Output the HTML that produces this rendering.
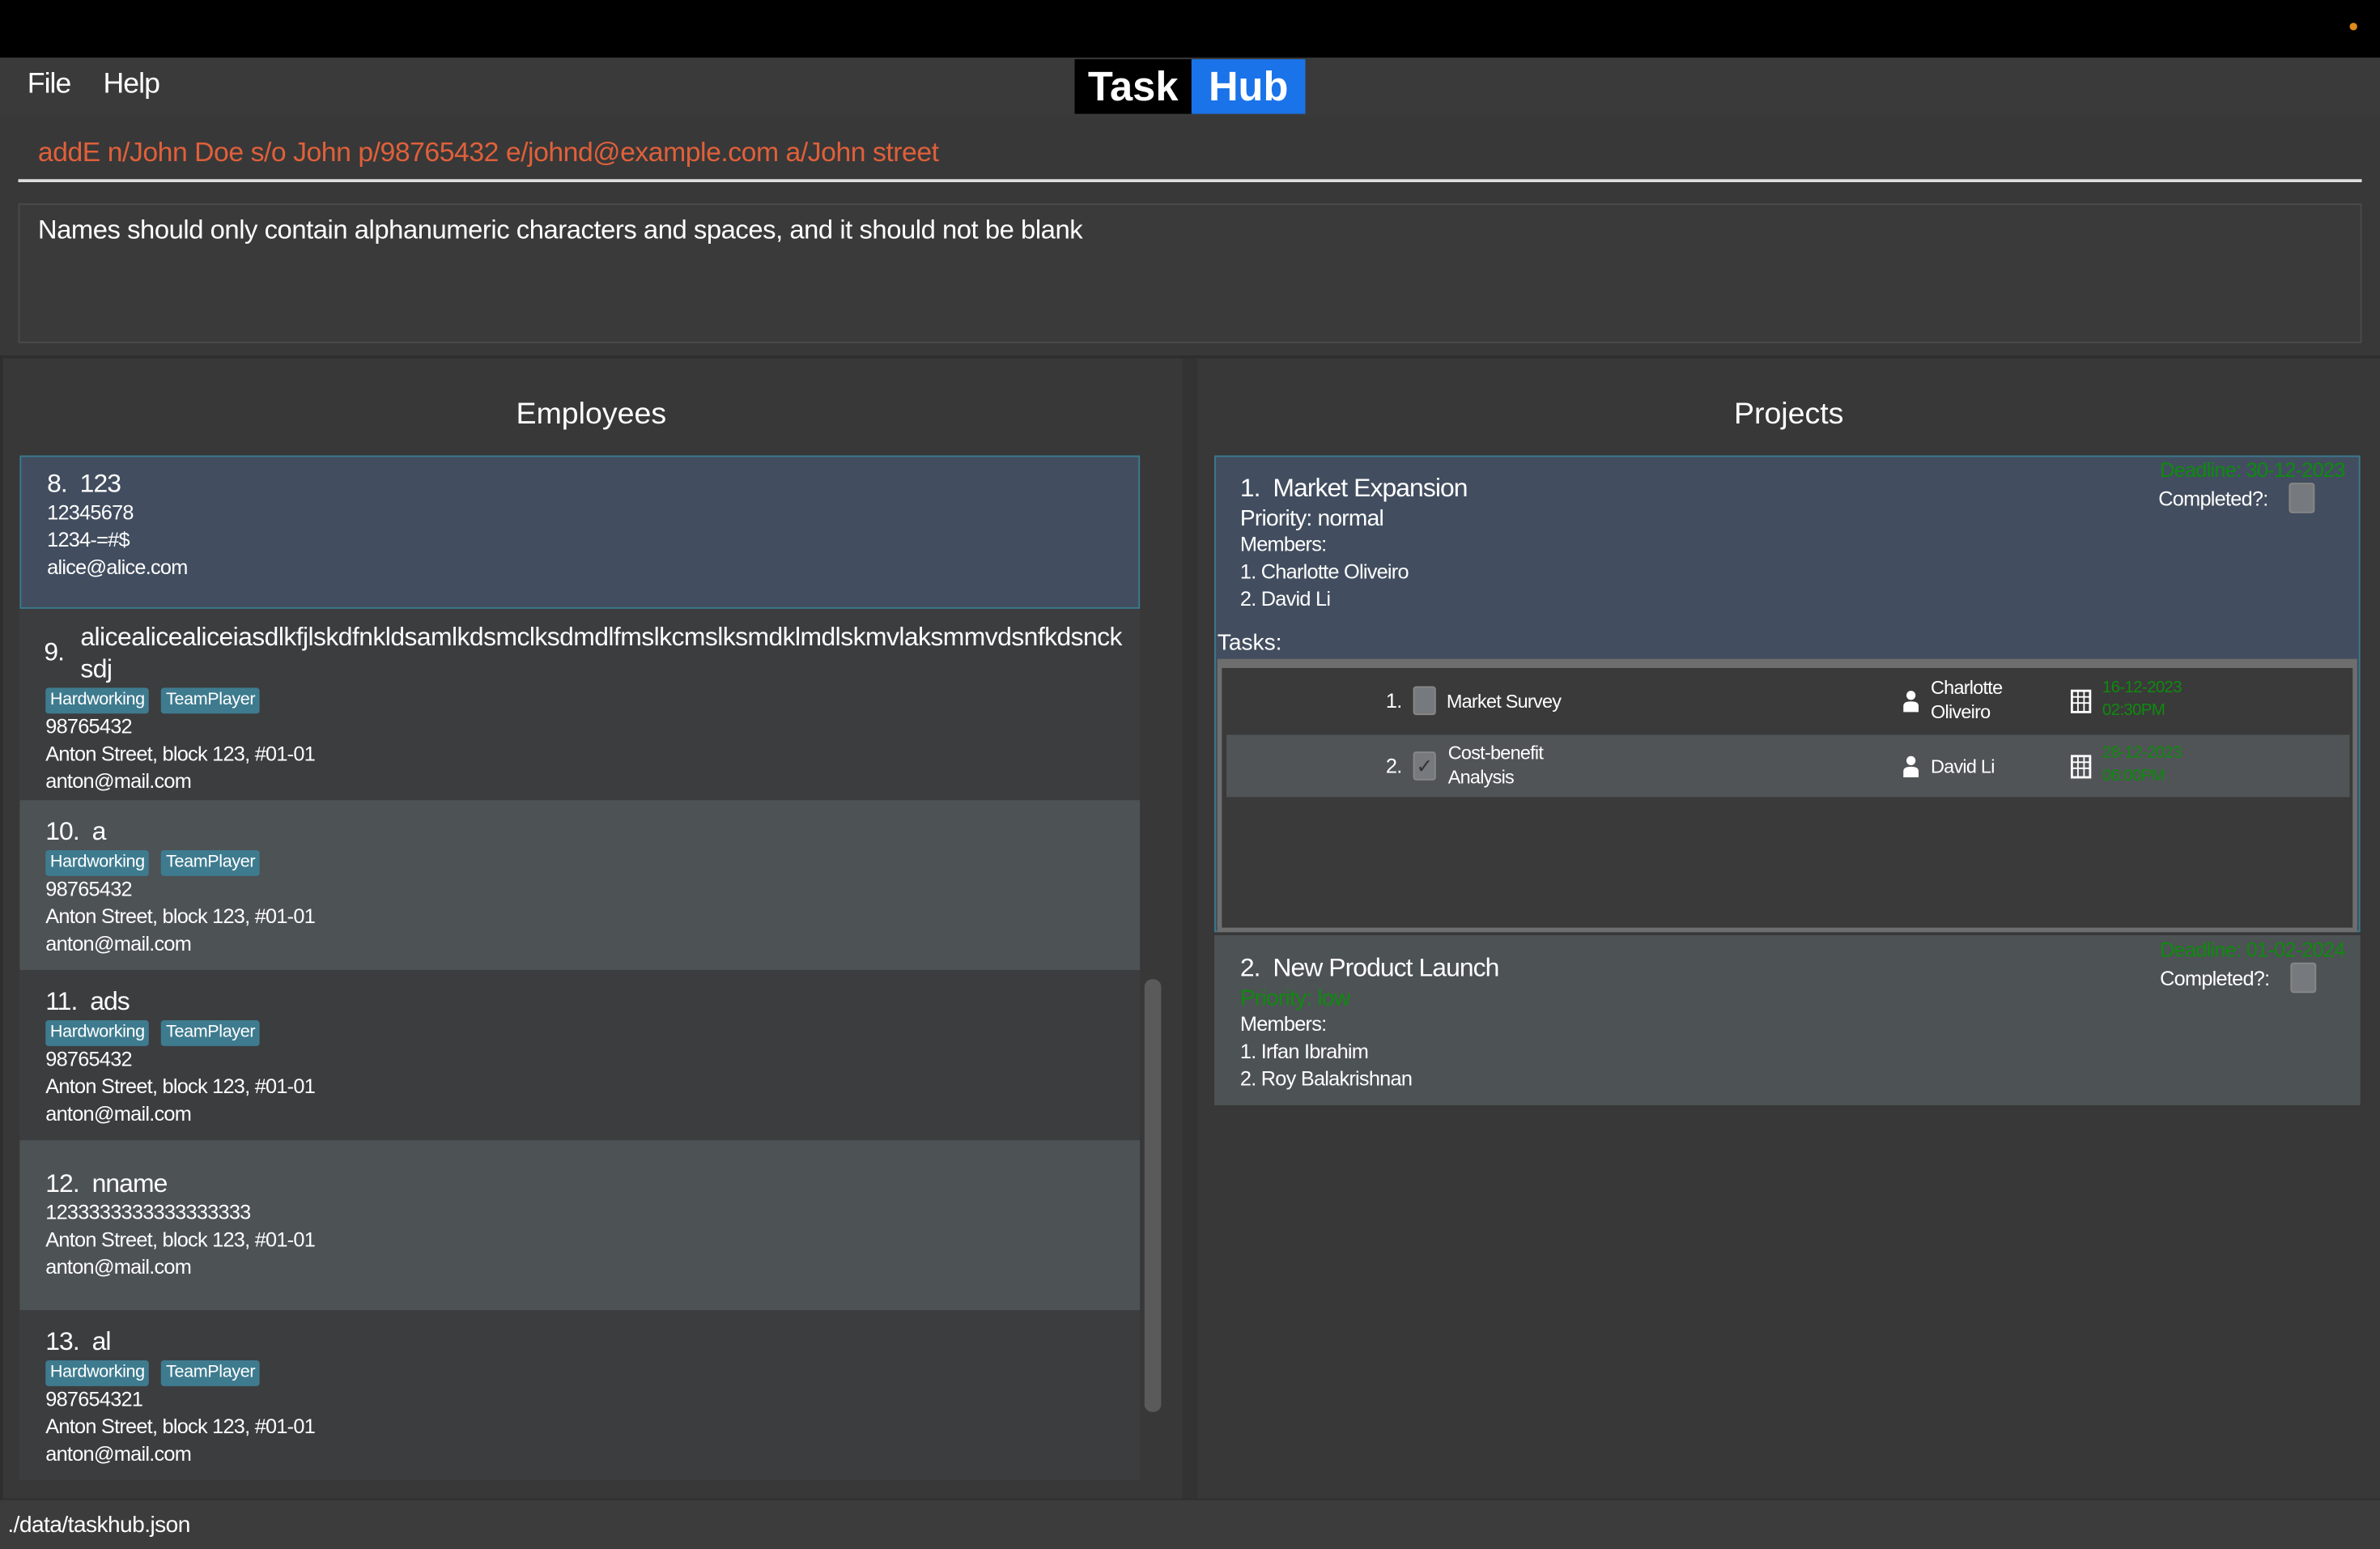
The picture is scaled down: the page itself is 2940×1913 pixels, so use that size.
<!DOCTYPE html>
<html><head><meta charset="utf-8"><style>
*{margin:0;padding:0;box-sizing:border-box}
html,body{width:2940px;height:1912px;overflow:hidden;background:#383838}
#w{position:absolute;left:0;top:0;width:1568px;height:1020px;transform:scale(1.875);transform-origin:0 0;font-family:"Liberation Sans",sans-serif;color:#fff;background:#383838}
.a{position:absolute}
.t{font-size:17px;letter-spacing:-0.5px}
.d{font-size:13.5px;letter-spacing:-0.4px;line-height:18px}
.tag{display:inline-block;background:#3e7b8f;color:#fff;font-size:11.5px;padding:1px 3px;border-radius:2px;margin-right:8px;letter-spacing:-0.2px;line-height:15px}
.card{position:absolute;left:13px;width:738px;padding-left:17px}
.g{color:#0e8a0e}
.cb{position:absolute;width:17px;height:20px;background:#76797d;border-radius:2px;border:1px solid #888}
</style></head><body><div id="w">
<div class="a" style="left:0;top:0;width:1568px;height:38px;background:#000"></div>
<div class="a" style="left:1548px;top:15px;width:5px;height:5px;border-radius:50%;background:#e08a1c"></div>
<div class="a" style="left:0;top:38px;width:1568px;height:39px;background:#3a3a3a"></div>
<div class="a t" style="left:18px;top:45px;font-size:19px">File</div>
<div class="a t" style="left:68px;top:45px;font-size:19px">Help</div>
<div class="a" style="left:708px;top:39px;width:77px;height:36px;background:#000;font-weight:bold;font-size:27px;text-align:center;line-height:36px">Task</div>
<div class="a" style="left:785px;top:39px;width:75px;height:36px;background:#1a73e8;font-weight:bold;font-size:27px;text-align:center;line-height:36px">Hub</div>
<div class="a" style="left:0;top:77px;width:1568px;height:40px;background:#383838"></div>
<div class="a" style="left:25px;top:90px;font-size:18px;color:#e0603a;letter-spacing:-0.25px">addE n/John Doe s/o John p/98765432 e/johnd@example.com a/John street</div>
<div class="a" style="left:12px;top:118px;width:1544px;height:2px;background:#ddd"></div>
<div class="a" style="left:12px;top:134px;width:1544px;height:92px;background:#3a3a3a;border:1px solid #4a4a4a"></div>
<div class="a" style="left:25px;top:141px;font-size:17.5px;letter-spacing:-0.25px">Names should only contain alphanumeric characters and spaces, and it should not be blank</div>
<div class="a" style="left:0;top:234px;width:1568px;height:2px;background:#2e2e2e"></div>
<div class="a" style="left:779px;top:236px;width:10px;height:751px;background:#333"></div>
<div class="a" style="left:0;top:236px;width:2px;height:751px;background:#2e2e2e"></div>
<div class="a" style="left:0;top:262px;width:779px;text-align:center;font-size:20px">Employees</div>
<div class="a" style="left:789px;top:262px;width:779px;text-align:center;font-size:20px">Projects</div>

<div class="card" style="top:300px;height:101px;background:#424e5f;border:1px solid #3a7a8f;padding-top:8px"><div class="t">8.&nbsp; 123</div><div class="d">12345678<br>1234-=#$<br>alice@alice.com</div></div>
<div class="card" style="top:401px;height:126px;background:#3c3d3f;padding-top:8px"><div class="a t" style="left:16px;top:19px">9.</div><div class="t" style="padding-left:23px;line-height:21px;letter-spacing:-0.3px">alicealicealiceiasdlkfjlskdfnkldsamlkdsmclksdmdlfmslkcmslksmdklmdlskmvlaksmmvdsnfkdsnck<br>sdj</div><div style="margin-top:0px"><span class="tag">Hardworking</span><span class="tag">TeamPlayer</span></div><div class="d">98765432<br>Anton Street, block 123, #01-01<br>anton@mail.com</div></div>
<div class="card" style="top:527px;height:112px;background:#4d5255;padding-top:11px"><div class="t">10.&nbsp; a</div><div><span class="tag">Hardworking</span><span class="tag">TeamPlayer</span></div><div class="d">98765432<br>Anton Street, block 123, #01-01<br>anton@mail.com</div></div>
<div class="card" style="top:639px;height:112px;background:#3c3d3f;padding-top:11px"><div class="t">11.&nbsp; ads</div><div><span class="tag">Hardworking</span><span class="tag">TeamPlayer</span></div><div class="d">98765432<br>Anton Street, block 123, #01-01<br>anton@mail.com</div></div>
<div class="card" style="top:751px;height:112px;background:#4d5255;padding-top:19px"><div class="t">12.&nbsp; nname</div><div class="d">1233333333333333333<br>Anton Street, block 123, #01-01<br>anton@mail.com</div></div>
<div class="card" style="top:863px;height:112px;background:#3c3d3f;padding-top:11px"><div class="t">13.&nbsp; al</div><div><span class="tag">Hardworking</span><span class="tag">TeamPlayer</span></div><div class="d">987654321<br>Anton Street, block 123, #01-01<br>anton@mail.com</div></div>
<div class="a" style="left:754px;top:645px;width:11px;height:285px;background:#5a5a5a;border-radius:5px"></div>

<div class="a" style="left:800px;top:300px;width:755px;height:314px;background:#424e5f;border:1px solid #3a7a8f"></div>
<div class="a t" style="left:817px;top:312px">1.&nbsp; Market Expansion</div>
<div class="a d" style="left:817px;top:333px;font-size:15px">Priority: normal</div>
<div class="a d" style="left:817px;top:350px">Members:<br>1. Charlotte Oliveiro<br>2. David Li</div>
<div class="a d g" style="left:1423px;top:301px">Deadline: 30-12-2023</div>
<div class="a d" style="left:1422px;top:320px">Completed?:</div>
<div class="cb" style="left:1508px;top:318px"></div>
<div class="a" style="left:802px;top:415px;font-size:15px">Tasks:</div>
<div class="a" style="left:802px;top:434px;width:751px;height:180px;background:#3a3a3a;border:3px solid #6e6e6e;border-top-width:6px"></div>
<div class="a" style="left:808px;top:484px;width:740px;height:41px;background:#505456"></div>
<div class="a d" style="left:913px;top:453px">1.</div>
<div class="cb" style="left:931px;top:452px;width:15px;height:19px"></div>
<div class="a d" style="left:953px;top:453px;font-size:12.5px">Market Survey</div>
<div class="a d" style="left:1272px;top:445px;font-size:12.5px;line-height:16px">Charlotte<br>Oliveiro</div>
<div class="a d g" style="left:1385px;top:446px;font-size:11px;line-height:15px">16-12-2023<br>02:30PM</div>
<div class="a d" style="left:913px;top:496px">2.</div>
<div class="cb" style="left:931px;top:495px;width:15px;height:19px;font-size:13px;line-height:17px;text-align:center;color:#333">✓</div>
<div class="a d" style="left:954px;top:488px;font-size:12.5px;line-height:16px">Cost-benefit<br>Analysis</div>
<div class="a d" style="left:1272px;top:496px;font-size:12.5px">David Li</div>
<div class="a d g" style="left:1385px;top:489px;font-size:11px;line-height:15px">28-12-2023<br>06:00PM</div>
<svg class="a" style="left:1253px;top:454px" width="12" height="16" viewBox="0 0 12 16"><circle cx="6" cy="4" r="3" fill="#fff"/><path d="M1 15V11Q1 8 6 8Q11 8 11 11V15Z" fill="#fff"/></svg>
<svg class="a" style="left:1253px;top:497px" width="12" height="16" viewBox="0 0 12 16"><circle cx="6" cy="4" r="3" fill="#fff"/><path d="M1 15V11Q1 8 6 8Q11 8 11 11V15Z" fill="#fff"/></svg>
<svg class="a" style="left:1364px;top:454px" width="14" height="16" viewBox="0 0 14 16"><rect x="1" y="1" width="12" height="14" fill="none" stroke="#fff" stroke-width="1.5"/><path d="M1 5H13M1 9H13M5 1V15M9 1V15" stroke="#fff"/></svg>
<svg class="a" style="left:1364px;top:497px" width="14" height="16" viewBox="0 0 14 16"><rect x="1" y="1" width="12" height="14" fill="none" stroke="#fff" stroke-width="1.5"/><path d="M1 5H13M1 9H13M5 1V15M9 1V15" stroke="#fff"/></svg>

<div class="a" style="left:800px;top:616px;width:755px;height:112px;background:#4d5255"></div>
<div class="a t" style="left:817px;top:628px">2.&nbsp; New Product Launch</div>
<div class="a d g" style="left:817px;top:649px;font-size:15px">Priority: low</div>
<div class="a d" style="left:817px;top:666px">Members:<br>1. Irfan Ibrahim<br>2. Roy Balakrishnan</div>
<div class="a d g" style="left:1423px;top:617px">Deadline: 01-02-2024</div>
<div class="a d" style="left:1423px;top:636px">Completed?:</div>
<div class="cb" style="left:1509px;top:634px"></div>

<div class="a" style="left:0;top:987px;width:1568px;height:33px;background:#3c3c3c;border-top:1px solid #2e2e2e"></div>
<div class="a" style="left:5px;top:996px;font-size:15px;letter-spacing:-0.3px">./data/taskhub.json</div>
</div></body></html>
